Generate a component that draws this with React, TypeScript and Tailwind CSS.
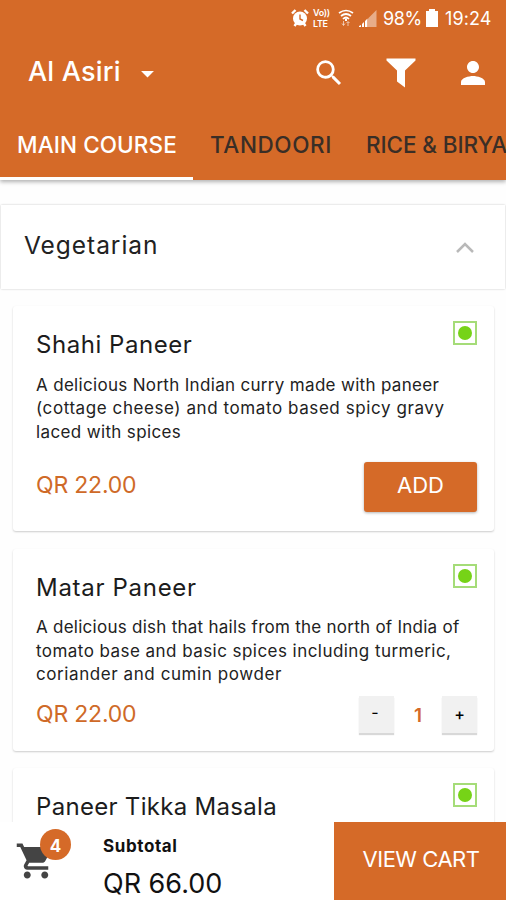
import { useState } from "react"
import { MdArrowDropDown, MdPerson, MdSearch, MdShoppingCart } from "react-icons/md"

type Line = {
    text: string
    tracking: string
}

type Dish = {
    id: number
    name: string
    nameTracking: string
    description: Line[]
    price: string
    quantity: number
}

const tabs = [
    { id: 1, name: 'MAIN COURSE', style: 'w-[193px] pl-[17px] tracking-[0.1px]' },
    { id: 2, name: 'TANDOORI', style: 'w-[156px] pl-[17px] tracking-[0.6px]' },
    { id: 3, name: 'RICE & BIRYANI', style: 'w-[220px] pl-[17px] tracking-[-0.1px]' }
]

const initialDishes: Dish[] = [
    {
        id: 1,
        name: 'Shahi Paneer',
        nameTracking: 'tracking-[0.55px]',
        description: [
            { text: 'A delicious North Indian curry made with paneer', tracking: 'tracking-[0.32px]' },
            { text: '(cottage cheese) and tomato based spicy gravy', tracking: 'tracking-[0.58px]' },
            { text: 'laced with spices', tracking: 'tracking-[0.36px]' }
        ],
        price: 'QR 22.00',
        quantity: 0
    },
    {
        id: 2,
        name: 'Matar Paneer',
        nameTracking: 'tracking-[0.7px]',
        description: [
            { text: 'A delicious dish that hails from the north of India of', tracking: 'tracking-[0.26px]' },
            { text: 'tomato base and basic spices including turmeric,', tracking: 'tracking-[0.45px]' },
            { text: 'coriander and cumin powder', tracking: 'tracking-[0.58px]' }
        ],
        price: 'QR 22.00',
        quantity: 1
    },
    {
        id: 3,
        name: 'Paneer Tikka Masala',
        nameTracking: 'tracking-[0.3px]',
        description: [],
        price: 'QR 22.00',
        quantity: 0
    }
]

function StatusBar() {
    return (
        <div className="flex h-9 items-center pl-[291px] text-white">
            <svg className="size-[18px]" viewBox="0 0 18 18">
                <path d="M1 4.5L4.5 1M17 4.5L13.5 1M3.5 17l2-3M14.5 17l-2-3" stroke="white" strokeWidth="2.4" />
                <circle cx="9" cy="9.5" r="7" fill="white" />
                <path d="M9 5.5v4.5l3 1.5" fill="none" stroke="#d56a28" strokeWidth="1.4" />
            </svg>
            <div className="ml-[4px] w-[17px] text-[9px] leading-[11px] font-semibold tracking-[-0.3px]">
                <p>Vo))</p>
                <p>LTE</p>
            </div>
            <svg className="ml-[8px] h-[18px] w-4" viewBox="0 0 16 18" fill="none" stroke="currentColor" strokeWidth="1.7">
                <path d="M1 4Q8-1 15 4M3 7Q8 3 13 7M5 10Q8 7 11 10" />
                <path d="M8 9.5v2.5" strokeWidth="2" />
                <path d="M5.5 12v4M4 14.5l1.5 2 1.5-2M10 17v-4M8.5 14l1.5-1.5 1.5 1.5" strokeWidth="1" opacity="0.6" />
            </svg>
            <svg className="ml-[5px] h-[18px] w-[18px]" viewBox="0 0 18 18" fill="white">
                <path d="M9 9.5L17.5 1v17H9z" opacity="0.45" />
                <path d="M0 18v-1l2-1v2zM3 18v-3l2-2v5zM6 18v-6l2.5-2.5V18z" />
            </svg>
            <span className="ml-[6px] w-[38px] text-[18px] tracking-[-0.4px]">98%</span>
            <svg className="ml-[5px] h-[18px] w-[12px]" viewBox="0 0 12 18" fill="currentColor">
                <path d="M3 0h6v2h3v16H0V2h3z" />
            </svg>
            <span className="ml-[7px] text-[18px] tracking-[0.1px]">19:24</span>
        </div>
    )
}

function VegMark() {
    return (
        <div className="mt-[15px] flex size-6 items-center justify-center border-2 border-[#a5dc78]">
            <div className="size-[14px] rounded-full bg-[#76d317]"></div>
        </div>
    )
}

function DishCard({ dish, onChange }: { dish: Dish, onChange: (id: number, amount: number) => void }) {

    const stepStyle = 'h-[37px] w-[35px] bg-[#f1f1f1] text-center shadow-[0_2px_1px_#d8d8d8]'

    return (
        <div className="rounded-[3px] bg-white pr-[17px] pl-[23px] shadow-[0_1px_2px_rgba(0,0,0,0.2)]">
            <div className="flex h-[66px] justify-between">
                <h2 className={`pt-[27px] text-[24px] leading-6 text-[#1c1c1c] ${dish.nameTracking}`}>{dish.name}</h2>
                <VegMark />
            </div>
            <div className="h-[72px] pt-[1.5px] text-[17px] leading-[23.7px] whitespace-nowrap text-[#222]">
                {dish.description.map((line) => (
                    <p key={line.text} className={line.tracking}>{line.text}</p>
                ))}
            </div>
            {dish.quantity === 0 ? (
                <div className="flex h-[87px] items-start justify-between pt-[18px]">
                    <p className="text-[23px] leading-[46px] tracking-[-0.2px] text-[#cf6a28]">{dish.price}</p>
                    <button className="h-[50px] w-[113px] rounded-[3px] bg-[#d56a28] pb-1 text-[22px] text-white shadow-[0_1px_3px_rgba(0,0,0,0.3)]"
                        onClick={() => onChange(dish.id, 1)}>ADD</button>
                </div>
            ) : (
                <div className="flex h-[64px] items-start justify-between pt-[9px]">
                    <p className="text-[23px] leading-[36px] tracking-[-0.2px] text-[#cf6a28]">{dish.price}</p>
                    <div className="flex">
                        <button className={`pr-[3px] pb-[5px] ${stepStyle}`} onClick={() => onChange(dish.id, -1)}>-</button>
                        <span className="w-[48px] text-center text-[19px] leading-[40px] font-semibold text-[#d56a28]">{dish.quantity}</span>
                        <button className={`font-medium ${stepStyle}`} onClick={() => onChange(dish.id, 1)}>+</button>
                    </div>
                </div>
            )}
        </div>
    )
}

export default function App() {

    const [dishes, setDishes] = useState<Dish[]>(initialDishes)
    const [activeTab, setActiveTab] = useState(1)

    const handleChange = (id: number, amount: number) => {
        setDishes(dishes.map(dish => dish.id === id ? { ...dish, quantity: dish.quantity + amount } : dish))
    }

    return (
        <div className="flex h-[900px] w-[506px] flex-col overflow-hidden bg-[#fefefe] font-[Inter,'Liberation_Sans',sans-serif]">
            <header className="z-10 h-[180px] shrink-0 bg-[#d56a28] shadow-[0_2px_4px_rgba(0,0,0,0.3)]">
                <StatusBar />
                <div className="flex h-[74px] items-center pl-[28px] text-white">
                    <h1 className="w-[93px] pb-[2px] text-[27px] font-medium tracking-[0.2px] whitespace-nowrap">Al Asiri</h1>
                    <MdArrowDropDown className="ml-[11px] size-[31px]" />
                    <MdSearch className="ml-[149px] size-[34px]" />
                    <svg className="ml-[40px] h-[30px] w-[30px]" viewBox="0 0 30 30" fill="currentColor">
                        <path d="M.5 .5h29v2L19 12.5V29.5l-8-6V12.5L.5 2.5z" />
                    </svg>
                    <MdPerson className="ml-[39px] size-[36px]" />
                </div>
                <nav className="flex h-[70px]">
                    {tabs.map((tab) => (
                        <button key={tab.id} onClick={() => setActiveTab(tab.id)}
                            className={`shrink-0 border-b-3 pt-[2px] text-left text-[22.5px] font-medium whitespace-nowrap ${tab.style} ${activeTab === tab.id ? 'border-white text-white' : 'border-transparent text-[#3a2e26]'}`}>
                            {tab.name}
                        </button>
                    ))}
                </nav>
            </header>

            <main className="min-h-0 flex-1 overflow-hidden pt-[25px]">
                <section className="mx-px flex h-[84px] items-center justify-between bg-white pr-[30px] pb-[4px] pl-[23px] shadow-[0_0_2px_rgba(0,0,0,0.22)]">
                    <h2 className="text-[24.5px] tracking-[0.95px] text-[#222]">Vegetarian</h2>
                    <svg className="mt-1 h-[12px] w-[20px]" viewBox="0 0 20 12" fill="none" stroke="#b9b9b9" strokeWidth="2.5">
                        <path d="M2 11l8-8 8 8" />
                    </svg>
                </section>
                <div className="flex flex-col gap-[17.5px] pt-[17px] pr-[12px] pl-[13px]">
                    {dishes.map((dish) => (
                        <DishCard key={dish.id} dish={dish} onChange={handleChange} />
                    ))}
                </div>
            </main>

            <footer className="z-10 flex h-[78px] shrink-0 bg-white">
                <div className="relative w-[103px] pt-[18px] pl-[15px]">
                    <MdShoppingCart className="size-[42px] text-[#444]" />
                    <span className="absolute top-[7px] left-[40px] size-[31px] rounded-full bg-[#d56a28] pt-[5px] text-center text-[17px] font-bold text-white">4</span>
                </div>
                <div className="w-[231px] pt-[13px] text-[#111]">
                    <p className="text-[17px] leading-[22px] font-bold tracking-[0.6px]">Subtotal</p>
                    <p className="mt-[10px] text-[27px] leading-[33px]">QR 66.00</p>
                </div>
                <button className="flex-1 bg-[#d56a28] pb-[3px] pl-[2px] text-[22px] tracking-[-0.5px] whitespace-nowrap text-white">VIEW CART</button>
            </footer>
        </div>
    )
}
